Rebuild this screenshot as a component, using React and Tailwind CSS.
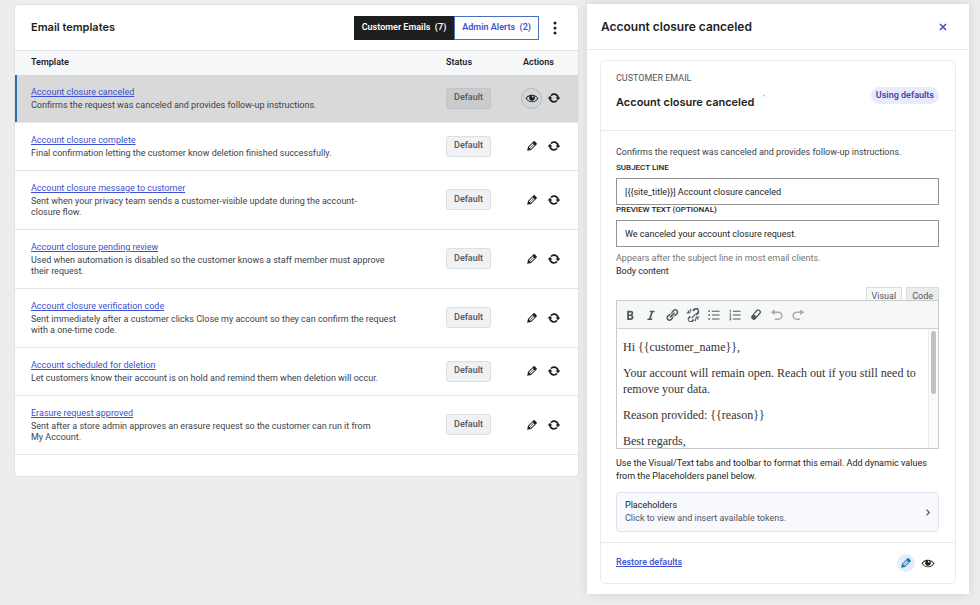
const ICONS = {
  edit: "M13.89 3.39l2.71 2.72c.46.46.42 1.24.03 1.64l-8.01 8.02-5.56 1.16 1.16-5.58s7.6-7.63 7.99-8.03c.39-.39 1.22-.39 1.68.07zm-2.73 2.79l-5.59 5.61 1.11 1.11 5.54-5.65zm-2.97 8.23l5.58-5.6-1.07-1.08-5.59 5.6z",
  update: "M10.2 3.28c3.53 0 6.43 2.61 6.92 6h2.08l-3.5 4-3.5-4h2.32c-.45-1.97-2.21-3.45-4.32-3.45-1.45 0-2.73.71-3.54 1.78L4.95 5.66C6.23 4.2 8.11 3.28 10.2 3.28zm-.4 13.44c-3.52 0-6.43-2.61-6.92-6H.8l3.5-4c1.17 1.33 2.33 2.67 3.5 4H5.48c.45 1.97 2.21 3.45 4.32 3.45 1.45 0 2.73-.71 3.54-1.78l1.71 1.95c-1.28 1.46-3.15 2.38-5.25 2.38z",
  eye: "M18.3 9.5C15 4.9 8.5 3.8 3.9 7.2c-1.2.9-2.2 2.1-3 3.4.2.4.5.8.8 1.2 3.3 4.6 9.6 5.6 14.2 2.4.9-.7 1.7-1.4 2.4-2.4.3-.4.5-.8.8-1.2-.3-.4-.5-.8-.8-1.1zm-8.2-2.3c.5-.5 1.3-.5 1.8 0s.5 1.3 0 1.8-1.3.5-1.8 0-.5-1.3 0-1.8zm-.1 7.7c-3.1 0-6-1.6-7.7-4.2C3.5 9 5.1 7.8 7 7.2c-.7.8-1 1.7-1 2.7 0 2.2 1.7 4.1 4 4.1 2.2 0 4.1-1.7 4.1-4v-.1c0-1-.4-2-1.1-2.7 1.9.6 3.5 1.8 4.7 3.5-1.7 2.6-4.6 4.2-7.7 4.2z",
  bold: "M6 4v13h4.54c1.37 0 2.46-.33 3.26-1 .8-.66 1.2-1.58 1.2-2.77 0-.84-.17-1.51-.51-2.01s-.9-.85-1.67-1.03v-.09c.57-.1 1.02-.4 1.36-.9s.51-1.13.51-1.91c0-1.14-.39-1.98-1.17-2.5C12.75 4.26 11.5 4 9.78 4H6zm2.57 5.15V6.26h1.36c.73 0 1.27.11 1.61.32.34.22.51.58.51 1.07 0 .54-.16.92-.47 1.15s-.82.35-1.51.35h-1.5zm0 2.19h1.6c1.44 0 2.16.53 2.16 1.61 0 .6-.17 1.05-.51 1.34s-.86.43-1.57.43H8.57v-3.38z",
  italic: "M14.78 6h-2.13l-2.8 9h2.12l-.62 2H4.6l.62-2h2.14l2.8-9H8.03l.62-2h6.75z",
  link: "M17.74 2.76c1.68 1.69 1.68 4.41 0 6.1l-1.53 1.52c-1.12 1.12-2.7 1.47-4.14 1.09l2.62-2.61.76-.77.76-.76c.84-.84.84-2.2 0-3.04-.84-.85-2.2-.85-3.04 0l-.77.76-3.38 3.38c-.37-1.44-.02-3.02 1.1-4.14l1.52-1.53c1.69-1.68 4.42-1.68 6.1 0zM8.59 13.43l5.34-5.34c.42-.42.42-1.1 0-1.52-.44-.43-1.13-.39-1.53 0l-5.33 5.34c-.42.42-.42 1.1 0 1.52.44.43 1.13.39 1.52 0zm-.76 2.29l4.14-4.15c.38 1.44.03 3.02-1.09 4.14l-1.52 1.53c-1.69 1.68-4.41 1.68-6.1 0-1.68-1.68-1.68-4.42 0-6.1l1.53-1.52c1.12-1.12 2.7-1.47 4.14-1.1l-4.14 4.15c-.85.84-.85 2.2 0 3.05.84.84 2.2.84 3.04 0z",
  unlink: "M17.74 2.26c1.68 1.69 1.68 4.41 0 6.1l-1.53 1.52c-.32.33-.69.58-1.08.8L13.3 8.85l1.39-1.4 1.52-1.53c.84-.84.84-2.2 0-3.04-.84-.85-2.2-.85-3.04 0l-1.53 1.53-.76.76-1.83-1.84c.22-.38.47-.75.79-1.07l1.8-1.5c1.69-1.68 4.42-1.68 6.1 0zM2 4l1.1-1.1 3.6 3.6-1.1 1.1zM5.8 1h1.6v4H5.8zM1 6.2h4v1.6H1zM16.9 17.1L18 16l-3.6-3.6-1.1 1.1zM12.6 19h1.6v-4h-1.6zM19 13.8h-4v-1.6h4zM7.43 14.08l6.1-6.1 1.1 1.1-6.1 6.1zM5.2 10.9l1.83 1.84-2.54 2.53c-.85.84-.85 2.2 0 3.04.84.84 2.2.84 3.04 0l2.53-2.53 1.84 1.83-2.5 2c-1.68 1.2-4 1-5.7-.5-1.68-1.68-1.68-4.42 0-6.1z",
  ul: "M2 3.5h2.2v2.2H2zM2 9h2.2v2.2H2zM2 14.5h2.2v2.2H2zM7 4h11v1.4H7zM7 9.4h11v1.4H7zM7 14.9h11v1.4H7z",
  ol: "M3 2.5h1v4H3zM2 3h1v1H2zM2 8h2.5v1.8L3.2 11h1.3v1H2v-1l1.5-1.5V9H2zM2 13.5h2.5v4H2v-1h1.5v-.6h-1v-.9h1v-.6H2zM7 4h11v1.4H7zM7 9.4h11v1.4H7zM7 14.9h11v1.4H7z",
  eraser: "M10.9 2.6L3.8 10.9c-1.1 1.3-1.1 3 0 4.1l1.5 1.4c1.2 1.1 2.9 1 4-.2l7.2-8.3c1.1-1.3 1.1-2.9 0-4l-1.6-1.5c-1.2-1.1-2.9-1-4 .2zm1.5 1.3c.4-.5 1-.5 1.4-.1l1.3 1.2c.4.4.4.9 0 1.4l-4.9 5.7c-.7-1.4-1.7-2.3-3.1-2.8z",
  undo: "M12 5H7V2L1 6l6 4V7h5c2.2 0 4 1.8 4 4s-1.8 4-4 4H7v2h5c3.3 0 6-2.7 6-6s-2.7-6-6-6z",
  redo: "M8 5h5V2l6 4-6 4V7H8c-2.2 0-4 1.8-4 4s1.8 4 4 4h5v2H8c-3.3 0-6-2.7-6-6s2.7-6 6-6z",
};

function Icon({ name }) {
  return (
    <svg viewBox="0 0 20 20" fill="currentColor" fillRule="evenodd" aria-hidden="true" className="size-3.5">
      <path d={ICONS[name]} />
    </svg>
  );
}

const TEMPLATES = [
  ["Account closure canceled", "Confirms the request was canceled and provides follow-up instructions."],
  ["Account closure complete", "Final confirmation letting the customer know deletion finished successfully."],
  ["Account closure message to customer", "Sent when your privacy team sends a customer-visible update during the account-closure flow."],
  ["Account closure pending review", "Used when automation is disabled so the customer knows a staff member must approve their request."],
  ["Account closure verification code", "Sent immediately after a customer clicks Close my account so they can confirm the request with a one-time code."],
  ["Account scheduled for deletion", "Let customers know their account is on hold and remind them when deletion will occur."],
  ["Erasure request approved", "Sent after a store admin approves an erasure request so the customer can run it from My Account."],
];

const TOOLS = [
  ["bold", "Bold"],
  ["italic", "Italic"],
  ["link", "Insert link"],
  ["unlink", "Remove link"],
  ["ul", "Bulleted list"],
  ["ol", "Numbered list"],
  ["eraser", "Clear formatting"],
  ["undo", "Undo"],
  ["redo", "Redo"],
];

function TemplateRow({ title, text, selected }) {
  return (
    <tr className={selected ? "bg-[#d9d9d9] border-b border-[#e2e4e7]" : "border-b border-[#e2e4e7]"}>
      <td className={selected ? "py-[11px] pl-4 pr-11 shadow-[inset_2px_0_0_#2f6da8]" : "py-[11px] pl-4 pr-11"}>
        <a href="#template" className="block w-fit leading-3 text-[#3c50d0] underline">{title}</a>
        <p className="mt-[2px] text-pretty leading-[11px] text-[#3c434a]">{text}</p>
      </td>
      <td>
        <span className={selected
          ? "inline-flex h-[21px] items-center rounded-[3px] border border-[#c0c3c8] bg-[#c9cbcf] px-[7px] font-medium text-[#50575e]"
          : "inline-flex h-[21px] items-center rounded-[3px] border border-[#dcdee2] bg-[#f0f1f3] px-[7px] font-medium text-[#50575e]"}>
          Default
        </span>
      </td>
      <td>
        <div className="-ml-0.5 flex items-center gap-px text-[#1e1e1e]">
          <button type="button" aria-label={selected ? "Viewing" : "Edit"} className={selected
            ? "flex size-[21px] items-center justify-center rounded-full border border-[#b4b9c0] bg-[#d3d7dc]"
            : "flex size-[21px] items-center justify-center"}>
            <Icon name={selected ? "eye" : "edit"} />
          </button>
          <button type="button" aria-label="Reset" className="flex size-[21px] items-center justify-center">
            <Icon name="update" />
          </button>
        </div>
      </td>
    </tr>
  );
}

function TemplateList() {
  return (
    <section className="mt-1 min-w-0 flex-1 rounded-[5px] border border-[#dfe1e4] bg-white pb-[21px]">
      <header className="flex h-[45px] items-center pl-4 pr-[15px]">
        <h1 className="flex-1 font-['Inter',sans-serif] text-[11px] font-semibold">Email templates</h1>
        <div className="flex h-6 font-semibold">
          <button type="button" className="bg-[#1e1e1e] px-2 text-white">Customer Emails&nbsp; (7)</button>
          <button type="button" className="border border-[#4a6fc0] px-[7px] text-[#3c50d0]">Admin Alerts&nbsp; (2)</button>
        </div>
        <button type="button" aria-label="More options" className="ml-2 flex h-6 w-4 items-center justify-center">
          <svg viewBox="0 0 4 14" className="h-3.5 w-1" fill="#1e1e1e" aria-hidden="true">
            <circle cx="2" cy="2" r="1.5" /><circle cx="2" cy="7" r="1.5" /><circle cx="2" cy="12" r="1.5" />
          </svg>
        </button>
      </header>
      <table className="w-full table-fixed border-collapse">
        <colgroup><col /><col className="w-[77px]" /><col className="w-[55px]" /></colgroup>
        <thead>
          <tr className="h-6 border-t border-[#e2e4e7] bg-[#f6f7f9] text-left">
            <th className="pl-4 font-semibold">Template</th>
            <th className="font-semibold">Status</th>
            <th className="font-semibold">Actions</th>
          </tr>
        </thead>
        <tbody>
          {TEMPLATES.map(([title, text], i) => <TemplateRow key={title} title={title} text={text} selected={i === 0} />)}
        </tbody>
      </table>
    </section>
  );
}

function Editor() {
  return (
    <div>
      <div className="flex justify-end gap-1 text-[#50575e]">
        <button type="button" className="h-[13px] border border-b-0 border-[#dcdcde] bg-[#f6f7f7] px-[5px] pt-[3px] leading-[10px]">Visual</button>
        <button type="button" className="h-[13px] border border-b-0 border-[#dcdcde] bg-[#ececed] px-[5px] pt-[3px] leading-[10px]">Code</button>
      </div>
      <div className="border border-[#c9cbcd]">
        <div className="flex h-7 items-center border-b border-[#d0d2d4] bg-[#f6f7f7] px-[2px] text-[#50575e]">
          {TOOLS.map(([name, label]) => (
            <button key={name} type="button" aria-label={label} className={name === "undo" || name === "redo"
              ? "flex size-[21px] items-center justify-center text-[#a7aaad]"
              : "flex size-[21px] items-center justify-center"}>
              <Icon name={name} />
            </button>
          ))}
        </div>
        <div className="flex h-[119px]">
          <div className="flex-1 space-y-2.5 overflow-hidden pl-[6px] pr-0.5 pt-2.5 font-['Liberation_Serif',serif] text-[12px] leading-4 text-[#333]">
            <p>Hi {"{{customer_name}}"},</p>
            <p>Your account will remain open. Reach out if you still need to remove your data.</p>
            <p>Reason provided: {"{{reason}}"}</p>
            <p>Best regards,</p>
          </div>
          <div className="w-2.5 border-l border-[#ececec] bg-[#fafafa] px-[2px] pt-[2px]">
            <div className="h-[63px] rounded-full bg-[#c1c1c1]" />
          </div>
        </div>
      </div>
    </div>
  );
}

function DetailPanel() {
  return (
    <section className="mt-1 w-2/5 shrink-0 self-start bg-white shadow-[0_0_10px_rgba(0,0,0,0.12)]">
      <header className="flex h-[46px] items-center border-b border-[#e8eaec] pl-3.5 pr-5">
        <h2 className="flex-1 font-['Inter',sans-serif] text-[12px] font-semibold">Account closure canceled</h2>
        <button type="button" aria-label="Close" className="flex size-3 items-center justify-center text-[#3c50d0]">
          <svg viewBox="0 0 8 8" className="size-2" stroke="currentColor" strokeWidth="1.6" aria-hidden="true"><path d="M1 1l6 6M7 1L1 7" /></svg>
        </button>
      </header>
      <div className="px-[13px] py-2.5">
        <article className="rounded-[6px] border border-[#e8eaee]">
          <div className="flex h-[70px] items-center border-b border-[#e8eaee] pl-[15px] pr-4">
            <div className="flex-1 pb-2.5">
              <p className="leading-3 text-[#50575e]">CUSTOMER EMAIL</p>
              <h3 className="mt-2.5 flex items-start gap-2 font-['Inter',sans-serif] text-[11px] font-semibold leading-4">
                Account closure canceled
                <svg viewBox="0 0 4 3" className="h-[3px] w-1" fill="none" stroke="#a0a4a8" strokeWidth="0.7" aria-hidden="true"><path d="M.4 2.4L2 .8l1.6 1.6" /></svg>
              </h3>
            </div>
            <span className="rounded-full bg-[#e8ebfb] px-[5px] py-[2px] font-semibold leading-[13px] text-[#4b41b0]">Using defaults</span>
          </div>
          <div className="pb-2.5 pl-[15px] pr-4 pt-[15px]">
            <p className="leading-3 text-[#3c434a]">Confirms the request was canceled and provides follow-up instructions.</p>
            <label htmlFor="subject" className="mt-[5px] block pb-[5px] text-[8px] font-medium leading-[10px]">SUBJECT LINE</label>
            <input id="subject" defaultValue="[{{site_title}}] Account closure canceled" className="block h-[27px] w-full border border-[#949494] px-2" />
            <label htmlFor="preview" className="block pb-[5px] text-[8px] font-medium leading-[10px]">PREVIEW TEXT (OPTIONAL)</label>
            <input id="preview" defaultValue="We canceled your account closure request." className="block h-[27px] w-full border border-[#949494] px-2" />
            <p className="mt-[5px] leading-[13px] text-[#757575]">Appears after the subject line in most email clients.</p>
            <p className="mb-[9px] leading-[13px]">Body content</p>
            <Editor />
            <p className="mt-2 leading-[13px]">Use the Visual/Text tabs and toolbar to format this email. Add dynamic values from the Placeholders panel below.</p>
            <button type="button" className="mt-[9px] flex w-full items-center rounded-[4px] border border-[#dfe3f0] bg-[#f8f9fd] px-2 py-[6px] text-left leading-[13px]">
              <span className="flex-1">
                <span className="block">Placeholders</span>
                <span className="block text-[#50575e]">Click to view and insert available tokens.</span>
              </span>
              <svg viewBox="0 0 4 7" className="h-[7px] w-1" fill="none" stroke="#50575e" strokeWidth="1.2" aria-hidden="true"><path d="M.6.6l2.6 2.9L.6 6.4" /></svg>
            </button>
          </div>
          <footer className="flex h-[41px] items-center gap-1 border-t border-[#e8eaee] pl-[15px] pr-[18px]">
            <a href="#restore" className="font-medium text-[#3c50d0] underline">Restore defaults</a>
            <button type="button" aria-label="Edit" className="ml-auto flex size-[18px] items-center justify-center rounded-full bg-[#e3eefa] text-[#2271b1]"><Icon name="edit" /></button>
            <button type="button" aria-label="Preview" className="flex size-[18px] items-center justify-center"><Icon name="eye" /></button>
          </footer>
        </article>
      </div>
    </section>
  );
}

export default function App() {
  return (
    <main className="flex min-h-screen items-start gap-2 bg-[#ededed] pl-3.5 pr-[11px] font-['Roboto',sans-serif] text-[9px] text-[#1e1e1e]">
      <TemplateList />
      <DetailPanel />
    </main>
  );
}
